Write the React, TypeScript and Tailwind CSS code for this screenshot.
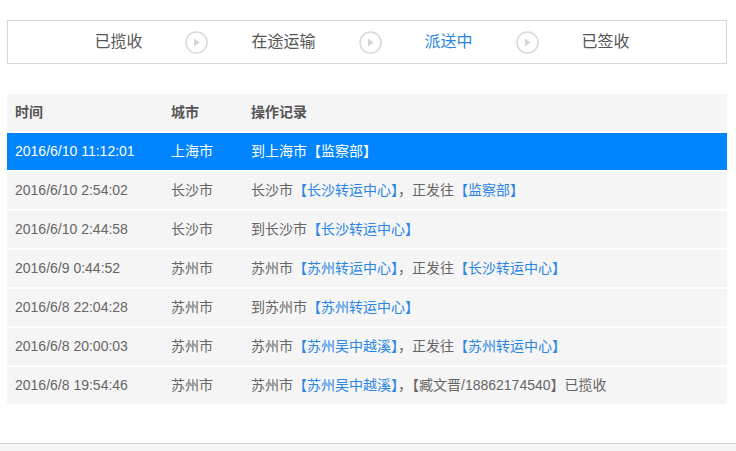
import React from "react";

const L = ({ children }: { children: React.ReactNode }) => <span className="text-[#2b85e4]">{children}</span>;

const rows: [string, string, React.ReactNode][] = [
  ["2016/6/10 2:54:02", "长沙市", <>长沙市<L>【长沙转运中心】</L>，正发往<L>【监察部】</L></>],
  ["2016/6/10 2:44:58", "长沙市", <>到长沙市<L>【长沙转运中心】</L></>],
  ["2016/6/9 0:44:52", "苏州市", <>苏州市<L>【苏州转运中心】</L>，正发往<L>【长沙转运中心】</L></>],
  ["2016/6/8 22:04:28", "苏州市", <>到苏州市<L>【苏州转运中心】</L></>],
  ["2016/6/8 20:00:03", "苏州市", <>苏州市<L>【苏州吴中越溪】</L>，正发往<L>【苏州转运中心】</L></>],
  ["2016/6/8 19:54:46", "苏州市", <>苏州市<L>【苏州吴中越溪】</L>，【臧文晋/18862174540】已揽收</>],
];

const Arrow = () => (
  <svg width="23" height="23" viewBox="0 0 23 23">
    <circle cx="11.5" cy="11.5" r="10.5" fill="white" stroke="#d9d9d9" strokeWidth="1.5" />
    <path d="M9 7.5 L14.5 11.5 L9 15.5 Z" fill="#d4d4d4" />
  </svg>
);

export default function App() {
  return (
    <div className="w-[736px] h-[451px] bg-white flex flex-col text-[14px] text-[#666]" style={{ fontFamily: '"Liberation Sans", "Noto Sans CJK SC", sans-serif' }}>
      <div className="ml-[7px] mr-[9px] mt-[20px] h-[44px] border border-[#d6d6d6] flex items-center justify-center gap-[43px] pr-[10px] text-[16px] text-[#555]">
        <span>已揽收</span><Arrow /><span>在途运输</span><Arrow /><span className="text-[#2b85e4]">派送中</span><Arrow /><span>已签收</span>
      </div>
      <div className="ml-[7px] mr-[9px] mt-[30px] flex flex-col gap-[2px]">
        <div className="h-[37px] bg-[#f5f5f5] flex items-center font-bold text-[#555]">
          <span className="w-[164px] pl-[8px]">时间</span><span className="w-[80px]">城市</span><span>操作记录</span>
        </div>
        <div className="h-[37px] bg-[#0084ff] flex items-center text-white">
          <span className="w-[164px] pl-[8px]">2016/6/10 11:12:01</span><span className="w-[80px]">上海市</span><span>到上海市【监察部】</span>
        </div>
        {rows.map((r, i) => (
          <div key={i} className="h-[37px] bg-[#f5f5f5] flex items-center">
            <span className="w-[164px] pl-[8px]">{r[0]}</span><span className="w-[80px]">{r[1]}</span><span>{r[2]}</span>
          </div>
        ))}
      </div>
      <div className="mt-auto h-[8px] border-t border-[#d6d6d6] bg-[#f5f5f5]" />
    </div>
  );
}
